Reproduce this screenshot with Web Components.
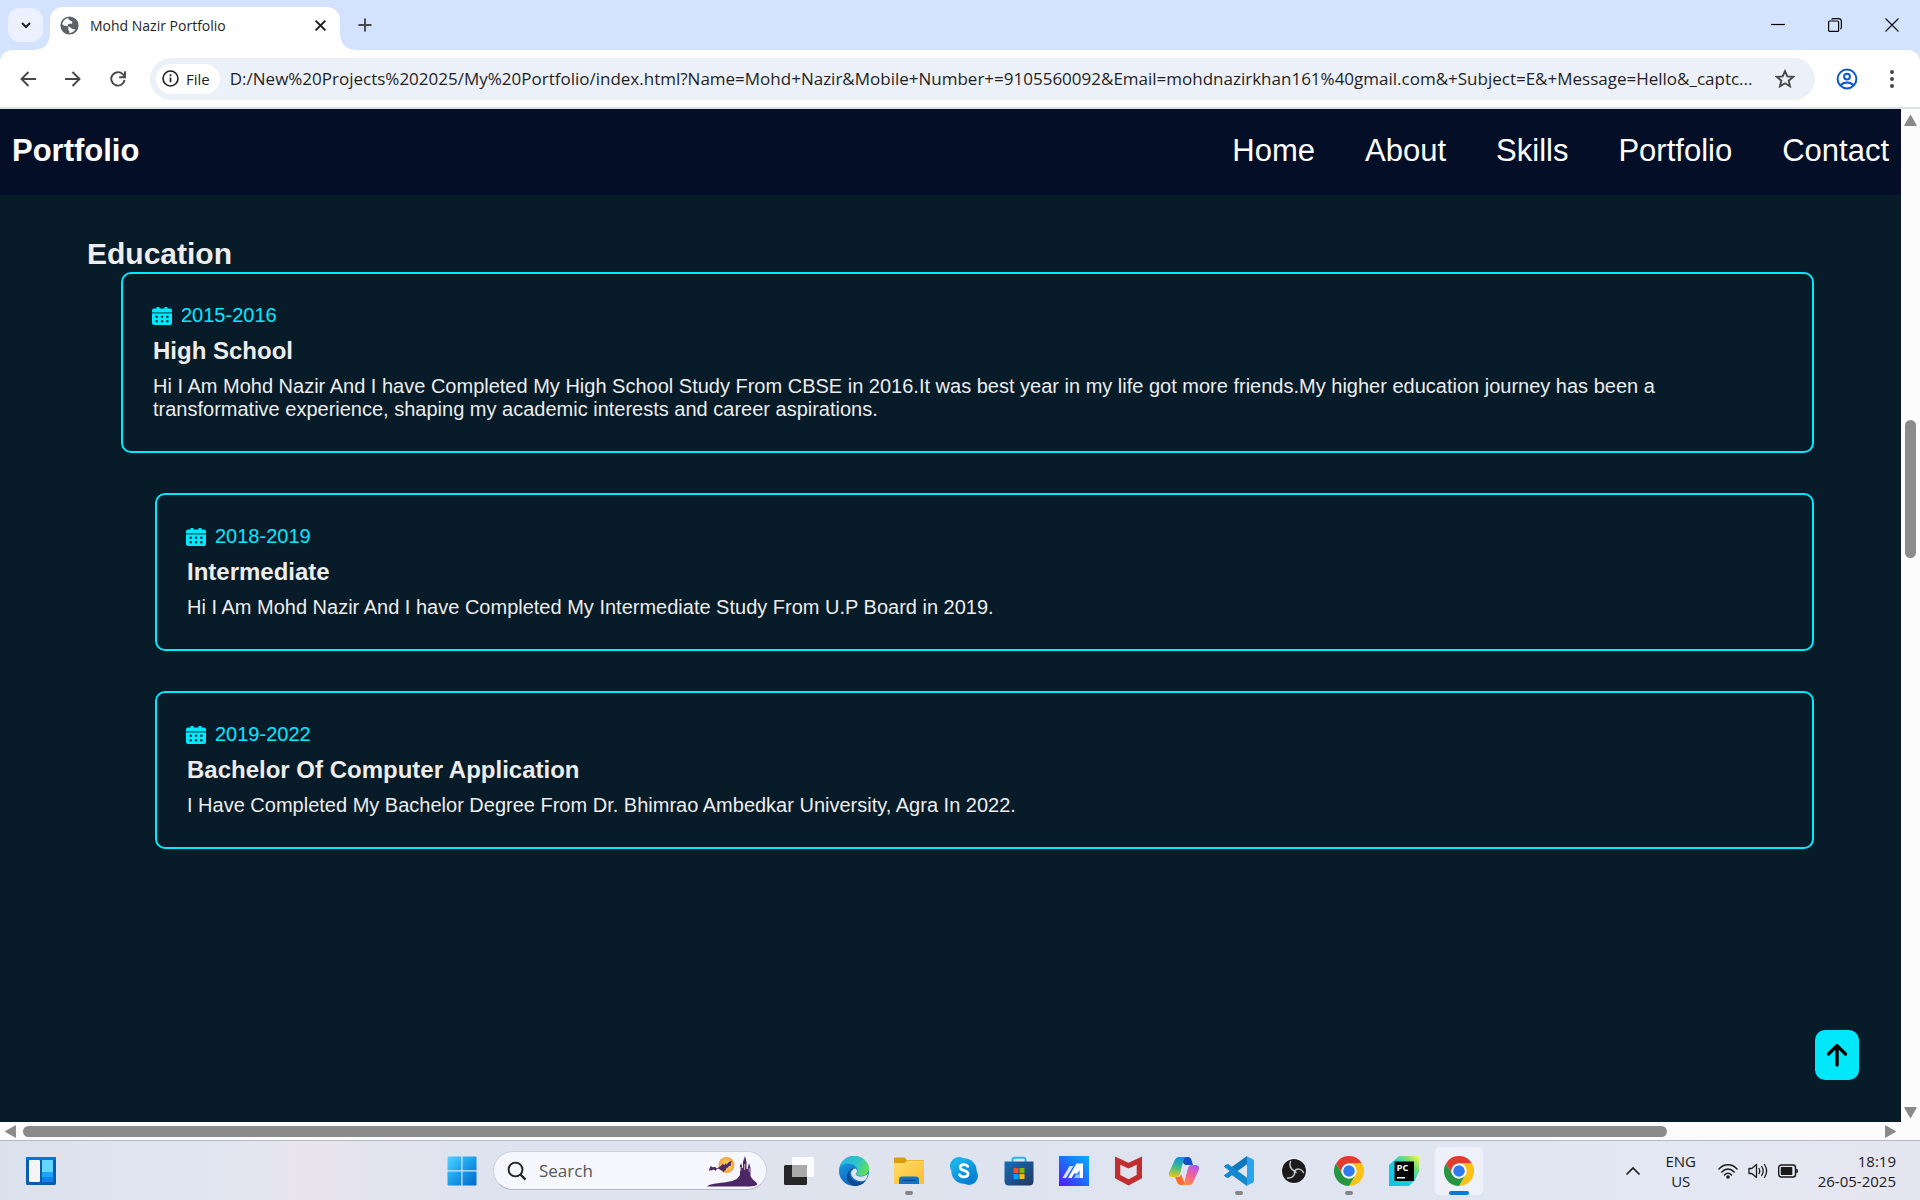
<!DOCTYPE html>
<html lang="en">
<head>
<meta charset="utf-8">
<title>Mohd Nazir Portfolio</title>
<style>
  html, body { margin: 0; height: 100%; overflow: hidden; }
  body { font-family: "Open Sans", "Noto Sans", sans-serif; color: #1f1f1f; }
</style>
</head>
<body>
<desktop-screen>
  <browser-window>
    <tab-strip slot="tabs"><browser-tab>Mohd Nazir Portfolio</browser-tab></tab-strip>
    <tool-bar slot="toolbar" url="D:/New%20Projects%202025/My%20Portfolio/index.html?Name=Mohd+Nazir&amp;Mobile+Number+=9105560092&amp;Email=mohdnazirkhan161%40gmail.com&amp;+Subject=E&amp;+Message=Hello&amp;_captc..."></tool-bar>
    <portfolio-page>
      <site-header slot="header">Portfolio</site-header>
      <education-section>
        Education
        <education-card slot="cards" class="first">
          <span slot="years">2015-2016</span>
          <span slot="title">High School</span>
          Hi I Am Mohd Nazir And I have Completed My High School Study From CBSE in 2016.It was best year in my life got more friends.My higher education journey has been a transformative experience, shaping my academic interests and career aspirations.
        </education-card>
        <education-card slot="cards">
          <span slot="years">2018-2019</span>
          <span slot="title">Intermediate</span>
          Hi I Am Mohd Nazir And I have Completed My Intermediate Study From U.P Board in 2019.
        </education-card>
        <education-card slot="cards">
          <span slot="years">2019-2022</span>
          <span slot="title">Bachelor Of Computer Application</span>
          I Have Completed My Bachelor Degree From Dr. Bhimrao Ambedkar University, Agra In 2022.
        </education-card>
      </education-section>
    </portfolio-page>
  </browser-window>
  <task-bar slot="taskbar"></task-bar>
</desktop-screen>

<script>
const ICONS = {
  chevronDown: ['0 0 12 12', '<path d="M2 4l4 4 4-4" fill="none" stroke="#1f1f1f" stroke-width="2"/>'],
  globe: ['0 0 20 20', '<circle cx="10" cy="10" r="9.6" fill="#5f6368"/><path d="M8.600 2.200C5.600 3 3.200 5.300 2.300 8.300c1.200 1.500 2.700 2 4 2 1.800.1 2.500.8 2.500 2 0 1.500-.5 2.200.6 3.200.6.600.4 1.600.3 2.400 2.500 0 5-1.200 6.400-3.300-.6-.9-1.700-1-2.800-1-1.500 0-1.500-1.500-2.700-1.800-1.300-.3-2.400-.8-2.400-2 0-1.400 1.300-1.700 2.800-1.600 1.600.1 2.200-.7 2-2C12.800 4.900 9 5.500 8.600 2.200z" fill="#fff"/>'],
  x: ['0 0 12 12', '<path d="M1.500 1.500l9 9M10.500 1.500l-9 9" fill="none" stroke="#1f1f1f" stroke-width="1.900"/>'],
  plus: ['0 0 14 14', '<path d="M7 .500v13M.500 7h13" fill="none" stroke="#474747" stroke-width="1.900"/>'],
  minimize: ['0 0 14 14', '<path d="M0 6.500h14" stroke="#000" stroke-width="1.200"/>'],
  restore: ['0 0 14 14', '<rect x=".6" y="3" width="10" height="10.400" rx="1" fill="none" stroke="#000" stroke-width="1.200"/><path d="M3.500 1.600Q4 .6 5.500.6h5q2.900 0 2.900 3v5.500q0 1.500-1 2" fill="none" stroke="#000" stroke-width="1.200"/>'],
  close: ['0 0 14 14', '<path d="M.5.500l13 13M13.500.500l-13 13" fill="none" stroke="#111" stroke-width="1.200"/>'],
  back: ['0 0 16 16', '<path d="M16 8H1.800M8.500 1L1.500 8l7 7" fill="none" stroke="#474747" stroke-width="1.900"/>'],
  forward: ['0 0 16 16', '<path d="M0 8h14.200M7.500 1l7 7-7 7" fill="none" stroke="#474747" stroke-width="1.900"/>'],
  reload: ['0 0 16 16', '<path d="M14.600 9A6.700 6.700 0 1 1 12.800 3.200L15 5.600" fill="none" stroke="#474747" stroke-width="1.900"/><path d="M15 .3v5.900H9.200" fill="none" stroke="#474747" stroke-width="1.900"/>'],
  info: ['0 0 18 18', '<circle cx="9" cy="9" r="7.900" fill="none" stroke="#1f1f1f" stroke-width="1.700"/><path d="M9 8v5M9 4.600v1.900" stroke="#1f1f1f" stroke-width="1.800"/>'],
  star: ['0 0 20 20', '<path d="M10 2.200l2.300 5.200 5.700.5-4.300 3.800 1.300 5.600-5-3-5 3 1.300-5.600L2 7.900l5.700-.5z" fill="none" stroke="#474747" stroke-width="1.900"/>'],
  avatar: ['0 0 22 22', '<g fill="none" stroke="#0b57d0" stroke-width="2"><circle cx="11" cy="11" r="9.400"/><circle cx="11" cy="8.600" r="2.900"/><path d="M4.500 17.300c3.300-3.800 9.700-3.800 13 0"/></g>'],
  dots: ['0 0 6 20', '<g fill="#474747"><circle cx="3" cy="3" r="2"/><circle cx="3" cy="10" r="2"/><circle cx="3" cy="17" r="2"/></g>'],
  calendar: ['0 0 20 18', '<g fill="#00eaff"><path d="M4.500 1.500V1a1.300 1.300 0 0 1 3 0v.5h5V1a1.300 1.300 0 0 1 3 0v.5H18a2 2 0 0 1 2 2V5H0V3.500a2 2 0 0 1 2-2z"/><path opacity=".5" d="M0 5h20v1.500H0z"/><path d="M0 6.500h20V16a2 2 0 0 1-2 2H2a2 2 0 0 1-2-2z"/></g><path fill="#081b29" d="M3.500 8.700h2.300v2.100H3.500zM8.900 8.700h2.300v2.100H8.900zM14.200 8.700h2.300v2.100h-2.300zM3.500 13.200h2.300v2.100H3.500zM8.900 13.200h2.300v2.100H8.900zM14.200 13.200h2.300v2.100h-2.300z"/>'],
  arrowUp: ['0 0 24 24', '<path d="M12 22V3M3.500 11L12 2.600l8.500 8.400" fill="none" stroke="#000" stroke-width="3.400" stroke-linecap="round" stroke-linejoin="round"/>'],
  triangle: ['0 0 12 12', '<path d="M6 1.500L11.200 10.500H.8z" fill="#8a8a8a" stroke="#8a8a8a" stroke-linejoin="round"/>'],
  widgets: ['0 0 30 28', '<rect width="30" height="28" rx="1.500" fill="#0a5cb0"/><path d="M0 0h30v3H0z" fill="#0b74cf"/><rect x="3" y="3" width="11" height="22" rx="1" fill="#f5f5f5"/><rect x="16" y="3" width="11" height="12" fill="#63d6ff"/><rect x="16" y="15" width="11" height="5" fill="#1fa2fb"/><rect x="16" y="20" width="11" height="5" fill="#0a84e8"/>'],
  start: ['0 0 30 30', '<defs><linearGradient id="w" x1="0" y1="0" x2="1" y2="1"><stop offset="0" stop-color="#4fd4ff"/><stop offset=".5" stop-color="#1b9de8"/><stop offset="1" stop-color="#0067cc"/></linearGradient></defs><path fill="url(#w)" d="M.5 1.500q0-1 1-1h12.800v13.800H.500zM15.500.5h13q1 0 1 1v12.800h-14zM.500 15.500h13.800v14H1.500q-1 0-1-1zM15.500 15.500h14v13q0 1-1 1h-13z"/>'],
  search: ['0 0 20 20', '<circle cx="8.500" cy="8.500" r="6.900" fill="none" stroke="#222" stroke-width="1.900"/><path d="M13.500 13.500L18.500 18.600" stroke="#222" stroke-width="2.300"/>'],
  castle: ['0 0 50 32', '<defs><radialGradient id="m"><stop offset="0" stop-color="#ffe07a"/><stop offset="1" stop-color="#f0a23c"/></radialGradient></defs><circle cx="19.500" cy="10" r="8" fill="url(#m)"/><path fill="#4c2a63" d="M2 16c0-2 1-4 2-5l2 1.500c1.500-1 3 0 4 1l2-1.500c2-.5 3-2 4-4l.5 2 1.500-.5 1-2 .5 2.500c1.500-2.500 3.500-4 5.500-4-1 1.500-1.500 3-1 5-1.500-.5-2.500 0-3 1.500-1.500 0-2 1-2.500 3-1 0-1.500.5-2 2-.5-1.500-1.500-2.500-3-2.500-1-.5-2-1.500-3-1-1 0-1.500 1-2 2-1-1.500-3-1.500-4-.5-.500-.5-1.500-.5-2.500.5z"/><path fill="#4b2864" d="M0 31.500c4-3.500 12-3 20-4.500 6-1 10-2.500 11.500-5L33 20v-9l1-3 1 3v2h1V7L38 1l1.500 6v7h1l1.500-6 1.500 5v8c1.500 4 6.500 6 7 8.500-2 1.500-4 2-8 2z"/><path fill="#cbb3c4" d="M33.300 12h.9v4h-.9zM37.200 9h1v6h-1zM41.700 13h.9v4h-.9z"/>'],
  taskview: ['0 0 30 28', '<rect x="0" y="8" width="23" height="20" rx="1.500" fill="#262626"/><rect x="8" y="0" width="22" height="20" rx="1" fill="#fff" fill-opacity=".88"/><path d="M8 8h15v12H9q-1 0-1-1z" fill="#aaa"/>'],
  edge: ['0 0 30 30', '<defs><linearGradient id="a" x1="0" y1=".2" x2="1" y2=".6"><stop offset="0" stop-color="#25b5e0"/><stop offset=".55" stop-color="#2fc3c9"/><stop offset="1" stop-color="#62e052"/></linearGradient><linearGradient id="b" x1="0" y1="0" x2=".5" y2="1"><stop offset="0" stop-color="#1ba2e3"/><stop offset="1" stop-color="#0b62bf"/></linearGradient></defs><circle cx="15" cy="15" r="15" fill="url(#b)"/><path fill="#114b8e" d="M10.500 17c.5 6 5.500 10 11 9.500 2-.2 4-1 5.500-2C24 28.500 20 30 16 30 10 29 6.500 24 8.500 18c1-3 3-5.500 6-6z"/><path fill="url(#a)" d="M.3 12.500C1.500 5.500 7.500 0 15 0c8.500 0 15 6 15 12.500 0 4.500-3.500 7.500-8 7.500-3 0-5-1-5-2 0-.8 1.300-1.500 1.300-3.500 0-4-4-6.800-8.800-6.800-4.500 0-8 2-9.200 4.800z"/><path fill="#dfe3ef" d="M14.500 13.200c2-2 3.600.3 3.500 2-.2 1.500-1.300 2-1.300 3 0 1.200 2.500 2.400 5.500 2.200 2.700-.2 5-1 6.800-3.200-.2 2.500-1.200 5-2.600 6.700-1.800 1-4 1.600-6.400 1.200C15.500 24 12 20.500 12 17c0-1.600 1-3 2.500-3.800z"/>'],
  explorer: ['0 0 30 28', '<defs><linearGradient id="f" x1="0" y1="0" x2="1" y2="1"><stop offset="0" stop-color="#ffdc6b"/><stop offset="1" stop-color="#fcbd2d"/></linearGradient></defs><path fill="#dd9a10" d="M0 1.500Q0 .5 1 .5h9.500L13 3h16q1 0 1 1v6H0z"/><path fill="url(#f)" d="M0 6h10.500L13 3.500h16q1 0 1 1V27H0z"/><path fill="#1173c4" d="M5 27v-4.500q0-3 3-3h14q3 0 3 3V27z"/><path d="M9 23.300h12" stroke="#06437f" stroke-width="1.300" stroke-linecap="round"/>'],
  skype: ['0 0 28 28', '<defs><linearGradient id="s" x1="0" y1="0" x2=".7" y2="1"><stop offset="0" stop-color="#1fc3f5"/><stop offset="1" stop-color="#0478d0"/></linearGradient></defs><g fill="url(#s)"><circle cx="9" cy="9" r="9"/><circle cx="19" cy="19" r="9"/><circle cx="14" cy="14" r="12.700"/></g><path d="M18 9.500c-1-1.700-3-2-4.400-1.900-2 .1-3.500 1.200-3.500 2.900 0 3.600 8 2.300 8 6.200 0 2-1.700 3.100-4 3.200-2 .1-3.700-.6-4.600-2.300" fill="none" stroke="#fff" stroke-width="2.600" stroke-linecap="round"/>'],
  store: ['0 0 30 30', '<defs><linearGradient id="t" x1="0" y1="0" x2="1" y2="1"><stop offset="0" stop-color="#1470bd"/><stop offset="1" stop-color="#22365f"/></linearGradient></defs><path d="M8.500 7V3.500q0-1.800 1.800-1.800h9.400q1.800 0 1.800 1.800V7" fill="none" stroke="#28b7ee" stroke-width="1.900"/><path fill="url(#t)" d="M.5 5.500h29V25q0 4.500-4.500 4.500H5Q.500 29.500.500 25z"/><path fill="#f25022" d="M9.500 12h5v5h-5z"/><path fill="#7fba00" d="M15.500 12h5v5h-5z"/><path fill="#00a4ef" d="M9.500 18h5v5h-5z"/><path fill="#ffb900" d="M15.500 18h5v5h-5z"/>'],
  myasus: ['0 0 30 30', '<defs><linearGradient id="y" x1="0" y1="1" x2="1" y2="0"><stop offset="0" stop-color="#5b17f5"/><stop offset=".5" stop-color="#1e6bfa"/><stop offset="1" stop-color="#06b0fb"/></linearGradient></defs><path fill="url(#y)" d="M0 0h30v30H0z"/><path fill="#d5e4ff" d="M10.500 10h4L7 22H3.500z"/><path fill="#fff" d="M17.500 7.500h3.500L12.500 22H9zM21 7.500h3V22h-3.500v-8l-2 3.500H15z"/><path fill="#9cc4ff" d="M17 18.500h3.500V22H15z"/>'],
  mcafee: ['0 0 28 30', '<path fill="#c02e30" d="M0 0l14 6.500L28 0v22.500L14 30 0 22.500z"/><path fill="#e0e3ee" d="M5.500 8.500L14 12.500l8.500-4v10.700L14 23.600l-8.500-4.400z"/>'],
  copilot: ['0 0 30 28', '<defs><linearGradient id="c" x1=".4" y1="0" x2=".3" y2="1"><stop offset="0" stop-color="#158bea"/><stop offset=".5" stop-color="#3bbf8b"/><stop offset="1" stop-color="#f0c419"/></linearGradient><linearGradient id="d" x1=".7" y1="0" x2=".3" y2="1"><stop offset="0" stop-color="#b05ce8"/><stop offset=".5" stop-color="#f0619b"/><stop offset="1" stop-color="#ff8b3d"/></linearGradient></defs><path fill="#1b4fc4" d="M9 0h10q2.500 0 3.500 3l1.500 5h-8z"/><path fill="url(#c)" d="M6 2.500Q7 0 10 0h8q-2.500 0-3.500 3.500L11 17q-1 3-4 3H3q-4 0-3-4.500z"/><path fill="#ff6b2c" d="M6 20h3q2.500 0 3-3l3 8q.7 2.500 1 3h-4Q9 28 8 25z"/><path fill="url(#d)" d="M24 25.500q-1 2.500-4 2.500h-8q2.500 0 3.500-3.500L19 11q1-3 4-3h4q4 0 3 4.500z"/>'],
  vscode: ['0 0 30 30', '<path fill="#0c77bd" d="M0 10.500l2.500-2.200L7 11.500l16-11.500v8.200L4 22 0 19.500 6 15z"/><path fill="#1389cf" d="M0 19.500l2.500 2.200L7 18.500 23 30v-8.200L4 8 0 10.500 6 15z"/><path fill="#2ba4f0" d="M22 0l6.500 3Q30 3.700 30 5v20q0 1.300-1.500 2L22 30q1-.5 1-2V2q0-1.500-1-2z"/>'],
  obs: ['0 0 26 26', '<circle cx="13" cy="13" r="13" fill="#f5f5f5"/><circle cx="13" cy="13" r="12" fill="#1b1b1e"/><g fill="none" stroke="#c9c9cc" stroke-width="1.500" stroke-linecap="round"><path d="M9.500 3.500c-2 4 .5 8 4 9.500"/><path d="M13.500 13c2.500-3 7-2.500 9 1.500"/><path d="M13.500 13c1 4-2.500 7.500-7 7"/><path d="M13.500 13l1.500 1.500"/></g>'],
  chrome: ['0 0 48 48', '<path fill="#e33b2e" d="M3.200 12A24 24 0 0 1 44.800 12H24A12 12 0 0 0 13.600 30z"/><path fill="#fbc116" d="M44.800 12A24 24 0 0 1 24 48L34.400 30A12 12 0 0 0 34.400 18 12 12 0 0 0 24 12z"/><path fill="#269643" d="M24 48A24 24 0 0 1 3.200 12L13.600 30A12 12 0 0 0 34.400 30z"/><circle cx="24" cy="24" r="12" fill="#fff"/><circle cx="24" cy="24" r="9.300" fill="#3079ee"/>'],
  pycharm: ['0 0 30 30', '<defs><linearGradient id="p" x1="0" y1="1" x2="1" y2="0"><stop offset="0" stop-color="#07c3f2"/><stop offset=".5" stop-color="#1ccfd8"/><stop offset=".75" stop-color="#78dd70"/><stop offset="1" stop-color="#fcf84a"/></linearGradient></defs><path fill="url(#p)" d="M10 0h20v15.500L26 24l-6 6H0V9z"/><path d="M5.500 5.500h19.500V25H5.500z"/><path fill="#fff" d="M8 21h8v1.500H8z"/><text x="7.500" y="15" font-family="Open Sans, sans-serif" font-weight="700" font-size="9.500" fill="#fff">PC</text>'],
  chevronUp: ['0 0 14 8', '<path d="M1 7l6-6 6 6" fill="none" stroke="#1a1a1a" stroke-width="1.700" stroke-linecap="round"/>'],
  wifi: ['0 0 20 16', '<g fill="none" stroke="#1a1a1a" stroke-width="1.500" stroke-linecap="round"><path d="M1 6C6 .4 14 .4 19 6"/><path d="M3.800 9C7.500 5 12.500 5 16.200 9"/><path d="M6.500 12c2-2.200 5-2.200 7 0"/></g><circle cx="10" cy="14" r="1.800" fill="#1a1a1a"/>'],
  speaker: ['0 0 20 18', '<g fill="none" stroke="#1a1a1a" stroke-width="1.300" stroke-linecap="round" stroke-linejoin="round"><path d="M1 6.500h2.800L8.500 2.500v13L3.800 11.500H1z"/><path d="M11 6.500q1.500 2.500 0 5M13.700 4.500q3 4.500 0 9M16.500 2.500q4.300 6.500 0 13"/></g>'],
  battery: ['0 0 20 14', '<rect x=".7" y="1" width="16.800" height="12" rx="2.500" fill="none" stroke="#1a1a1a" stroke-width="1.400"/><rect x="2.800" y="3" width="11.500" height="8" rx=".8" fill="#1a1a1a"/><path d="M18.200 4.800q1.800 0 1.800 2.200t-1.800 2.200z" fill="#1a1a1a"/>'],
};

const RESET = `
  :host, *, *::before, *::after { box-sizing: border-box; }
  button { appearance: none; border: 0; margin: 0; padding: 0; background: none; color: inherit;
           font: inherit; display: grid; place-items: center; }
  a { color: inherit; text-decoration: none; }
`;

function define(name, css, markup) {
  customElements.define(name, class extends HTMLElement {
    connectedCallback() {
      if (this.shadowRoot) return;
      const html = typeof markup === 'function' ? markup(this) : markup;
      this.attachShadow({ mode: 'open' }).innerHTML = `<style>${RESET}${css}</style>${html}`;
    }
  });
}

const icon = (name, w, h = w) => `<ui-icon name="${name}" style="width:${w}px;height:${h}px"></ui-icon>`;

define('ui-icon', ':host { display: block; flex: none; } svg { display: block; width: 100%; height: 100%; }', el => {
  const [box, body] = ICONS[el.getAttribute('name')];
  return `<svg viewBox="${box}" aria-hidden="true">${body}</svg>`;
});

define('desktop-screen', `
  :host { display: flex; flex-direction: column; height: 100vh; }
  .work { flex: 1; min-height: 0; display: flex; flex-direction: column; }
`, '<div class="work"><slot></slot></div><slot name="taskbar"></slot>');

define('browser-window', `
  :host { flex: 1; min-height: 0; display: flex; flex-direction: column; }
  .view { flex: 1; min-height: 0; display: grid; grid-template: minmax(0, 1fr) 18px / minmax(0, 1fr) 19px; background: #fcfcfc; }
`, `<slot name="tabs"></slot><slot name="toolbar"></slot>
  <div class="view"><slot></slot>
    <scroll-track before="287" thumb="138" after="542"></scroll-track>
    <scroll-track direction="horizontal" before="0" thumb="1644" after="211"></scroll-track></div>`);

define('scroll-track', `
  :host { display: flex; flex-direction: column; align-items: center; min-width: 0; min-height: 0; padding: 5px 0 3px; gap: 6px; }
  :host([direction]) { flex-direction: row; padding: 0 4px; }
  .rail { flex: 1; align-self: stretch; display: flex; flex-direction: inherit; align-items: center; }
  .thumb { width: 11px; min-height: 20px; border-radius: 6px; background: #8b8b8b; }
  :host([direction]) .thumb { width: auto; height: 11px; min-height: 0; }
  .down { transform: rotate(180deg); }
  :host([direction]) .up { transform: rotate(-90deg); }
  :host([direction]) .down { transform: rotate(90deg); }
`, el => `<button class="up" aria-label="Scroll back">${icon('triangle', 13)}</button>
  <div class="rail"><i style="flex:${el.getAttribute('before')}"></i><i class="thumb" style="flex:${el.getAttribute('thumb')}"></i><i style="flex:${el.getAttribute('after')}"></i></div>
  <button class="down" aria-label="Scroll on">${icon('triangle', 13)}</button>`);

define('tab-strip', `
  :host { display: flex; height: 50px; background: #d3e3fd; padding-left: 8px; }
  .list { width: 35px; height: 34px; margin-top: 8px; border-radius: 12px; background: #ebf1fe; }
  slot { display: block; }
  .new { width: 34px; margin-left: 8px; }
  .controls { display: flex; margin-left: auto; }
  .controls button { width: 57px; padding-bottom: 1px; }
`, `<button class="list" aria-label="Search tabs">${icon('chevronDown', 12)}</button>
  <slot></slot>
  <button class="new" aria-label="New tab">${icon('plus', 14)}</button>
  <div class="controls"><button aria-label="Minimize">${icon('minimize', 14)}</button><button aria-label="Restore">${icon('restore', 14)}</button><button aria-label="Close">${icon('close', 14)}</button></div>`);

define('browser-tab', `
  :host { position: relative; display: flex; align-items: center; gap: 11px; width: 290px; height: 43px; margin: 7px 0 0 7px;
          padding: 0 13px 7px 10px; border-radius: 13px 13px 0 0; background: #fff; font-size: 14px; }
  :host::before, :host::after { content: ""; position: absolute; bottom: 0; width: 14px; height: 14px; }
  :host::before { right: 100%; background: radial-gradient(circle at 0 0, #0000 13px, #fff 14px); }
  :host::after { left: 100%; background: radial-gradient(circle at 100% 0, #0000 13px, #fff 14px); }
  .title { flex: 1; white-space: nowrap; }
`, `${icon('globe', 19)}<span class="title"><slot></slot></span><button aria-label="Close tab">${icon('x', 13)}</button>`);

define('tool-bar', `
  :host { display: block; background: #d3e3fd; }
  .bar { display: flex; align-items: center; height: 59px; padding: 0 13px 0 5px; background: #fff;
         border-bottom: 2px solid #dde2e1; border-radius: 12px 12px 0 0; }
  .nav { width: 45px; height: 45px; }
  .box { flex: 1; min-width: 0; display: flex; align-items: center; height: 42px; margin: 0 9px 0 10px; padding: 0 20px 0 6px;
         border-radius: 21px; background: #ecf0f9; }
  .chip { display: flex; align-items: center; gap: 7px; height: 30px; padding: 0 10px 0 6px; border-radius: 15px; background: #fff; font-size: 15px; font-weight: 500; }
  input { flex: 1; min-width: 0; height: 30px; margin: 0 12px 0 10px; padding: 0; border: 0; outline: 0; background: none; color: #1f1f1f;
          font-family: "Open Sans", sans-serif; font-size: 17px; }
  .profile { width: 46px; height: 40px; }
  .more { width: 30px; height: 40px; margin-left: 7px; }
`, el => `<div class="bar">
  <button class="nav" aria-label="Back">${icon('back', 16)}</button><button class="nav" aria-label="Forward">${icon('forward', 16)}</button><button class="nav" aria-label="Reload">${icon('reload', 16)}</button>
  <div class="box"><button class="chip">${icon('info', 17)}File</button>
    <input aria-label="Address" value="${el.getAttribute('url').replaceAll('&', '&amp;')}">
    <button aria-label="Bookmark">${icon('star', 20)}</button></div>
  <button class="profile" aria-label="Profile">${icon('avatar', 22)}</button><button class="more" aria-label="Menu">${icon('dots', 6, 20)}</button></div>`);

define('portfolio-page', `
  :host { position: relative; display: flex; flex-direction: column; min-width: 0; min-height: 0; overflow: hidden;
          background: #081b29; color: #ededed; font-family: "Liberation Sans", Arial, sans-serif; }
  .top { position: absolute; right: 42px; bottom: 42px; display: grid; place-items: center; width: 44px; height: 50px; border-radius: 10px; background: #00e8fa; }
`, `<slot name="header"></slot><slot></slot><a class="top" href="#home" aria-label="Back to top">${icon('arrowUp', 24)}</a>`);

define('site-header', `
  :host { display: flex; align-items: center; justify-content: space-between; height: 86px; padding: 0 12px 2px; background: #040f27; color: #fff; font-size: 31px; }
  strong, a { line-height: 36px; }
  nav { display: flex; gap: 50px; }
`, `<strong><slot></slot></strong>
  <nav><a href="#home">Home</a><a href="#about">About</a><a href="#skills">Skills</a><a href="#portfolio">Portfolio</a><a href="#contact">Contact</a></nav>`);

define('education-section', `
  :host { display: block; padding: 42px 87px 0; }
  h2 { margin: 0; padding-bottom: 2px; font-size: 30px; line-height: 33px; }
  .cards { display: flex; flex-direction: column; gap: 40px; }
  ::slotted(education-card) { margin-left: 68px; }
  ::slotted(education-card.first) { margin-left: 34px; }
`, '<h2><slot></slot></h2><div class="cards"><slot name="cards"></slot></div>');

define('education-card', `
  :host { display: flex; flex-direction: column; gap: 10px; padding: 30px; border: 2px solid #00eaff; border-radius: 10px; font-size: 20px; line-height: 23px; }
  .years { display: flex; align-items: center; gap: 9px; margin-left: -1px; color: #00eaff; }
  h3 { margin: 0; font-size: 24px; line-height: 28px; }
  p { margin: 0; }
`, `<div class="years">${icon('calendar', 20, 18)}<slot name="years"></slot></div><h3><slot name="title"></slot></h3><p><slot></slot></p>`);

define('task-item', `
  :host { display: grid; place-items: center; width: 55px; height: 58px; }
  button { position: relative; width: 48px; height: 48px; border-radius: 5px; }
  :host([active]) button { background: #eef1f9; box-shadow: 0 0 0 1px #e3e7f2, 0 1px 1px #c9cede; }
  :host([running]) button::after, :host([active]) button::after { content: ""; position: absolute; bottom: 0; width: 8px; height: 4px; border-radius: 2px; background: #858585; }
  :host([active]) button::after { width: 20px; background: #0a78d7; }
`, el => `<button aria-label="${el.getAttribute('label')}">${icon(el.getAttribute('icon'), el.getAttribute('w') || 30, el.getAttribute('h') || el.getAttribute('w') || 30)}</button>`);

define('task-bar', `
  :host { display: grid; grid-template-columns: 1fr auto 1fr; align-items: center; height: 60px; border-top: 1px solid #b5b9c4;
          background: linear-gradient(90deg, #dbe1ec 0, #dfe6f2 10%, #e9e5ee 16%, #dfe3ef 24%, #dee3ee 45%, #dfe5f1 75%, #e3e8f4 88%, #e6e6f1 97%, #e3e5ef 100%); }
  .left { padding-left: 26px; justify-self: start; }
  .apps { display: flex; align-items: center; }
  label { display: flex; align-items: center; width: 274px; height: 39px; margin: 0 4px; padding: 0 9px 0 13px; border: 1px solid #ccd1de; border-bottom-color: #b4b9ca; border-radius: 20px; background: #f5f7fc; }
  input { flex: 1; min-width: 0; margin: 0 0 0 12px; padding: 0; border: 0; outline: 0; background: none; font-family: "Open Sans", sans-serif; font-size: 17px; color: #555; }
  input::placeholder { color: #555; opacity: 1; }
  .tray { justify-self: end; display: flex; align-items: center; gap: 10px; padding-right: 24px; font-size: 15px; line-height: 20px; color: #1a1a1a; }
  .lang { width: 42px; margin: 0 6px 0 10px; text-align: center; }
  .clock { margin-left: 10px; text-align: right; }
`, `<div class="left"><button aria-label="Widgets">${icon('widgets', 30, 28)}</button></div>
  <div class="apps"><task-item icon="start" label="Start"></task-item>
    <label>${icon('search', 20)}<input aria-label="Search" placeholder="Search">${icon('castle', 50, 32)}</label>
    <task-item icon="taskview" label="Task view" w="30" h="28"></task-item>
    <task-item icon="edge" label="Edge"></task-item>
    <task-item icon="explorer" label="File Explorer" w="30" h="28" running></task-item>
    <task-item icon="skype" label="Skype" w="28"></task-item>
    <task-item icon="store" label="Store"></task-item>
    <task-item icon="myasus" label="MyASUS"></task-item>
    <task-item icon="mcafee" label="McAfee" w="27" h="30"></task-item>
    <task-item icon="copilot" label="Copilot" w="30" h="28"></task-item>
    <task-item icon="vscode" label="Code" running></task-item>
    <task-item icon="obs" label="OBS" w="26"></task-item>
    <task-item icon="chrome" label="Chrome" running></task-item>
    <task-item icon="pycharm" label="PyCharm"></task-item>
    <task-item icon="chrome" label="Chrome" active></task-item></div>
  <div class="tray"><button aria-label="Hidden icons">${icon('chevronUp', 14, 8)}</button><div class="lang">ENG<br>US</div>
    ${icon('wifi', 20, 16)}${icon('speaker', 20, 18)}${icon('battery', 20, 14)}
    <div class="clock">18:19<br>26-05-2025</div></div>`);
</script>
</body>
</html>
